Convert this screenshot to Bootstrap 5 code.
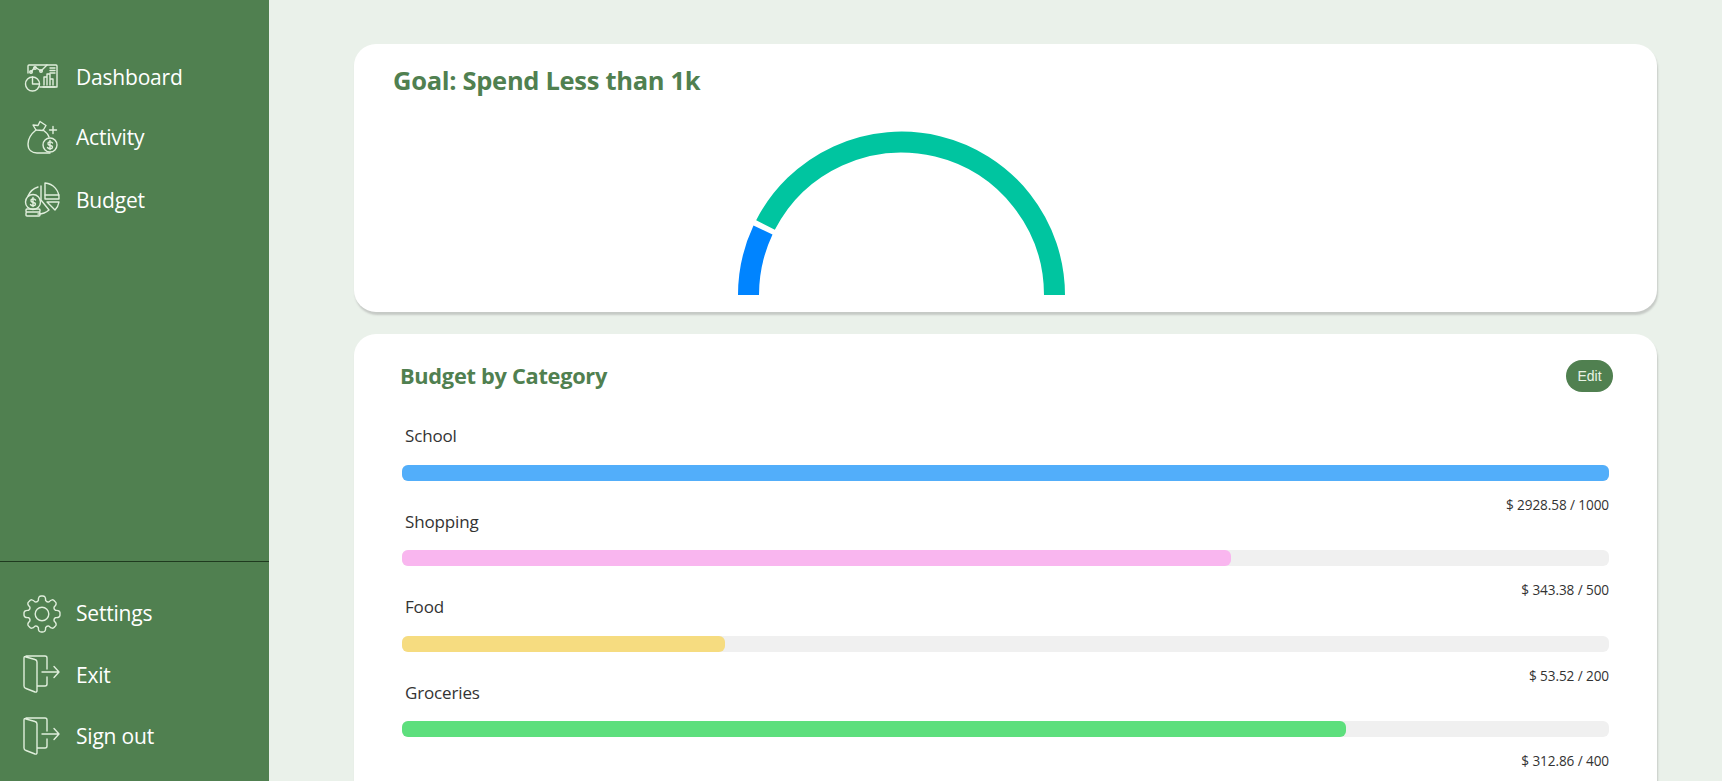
<!DOCTYPE html>
<html lang="en">
  <head>
    <meta charset="UTF-8" />
    <title>Budget</title>
    <link rel="stylesheet" href="https://cdn.jsdelivr.net/npm/bootstrap@5.3.3/dist/css/bootstrap.min.css" />
    <style>
      html, body { height: 100%; overflow: hidden; }
      body { background: #eaf1ea; font-family: "Open Sans", "Noto Sans", sans-serif; color: #333; }
      .side-bar { width: 269px; height: 781px; background: #508050; flex: none; padding-top: 48px; }
      .side-top { height: 513px; }
      .side-bottom { border-top: 1px solid #1f3a1f; padding-top: 21px; }
      .side-link { height: 60px; padding-left: 23px; color: #fff; font-size: 21px; letter-spacing: -0.2px; text-decoration: none; }
      .side-bottom .side-link { height: 61.5px; }
      .side-link svg { width: 38px; height: 38px; margin-right: 15px; flex: none; fill: none; stroke: #e0eedc; stroke-width: 1.4; stroke-linejoin: round; stroke-linecap: round; overflow: visible; }
      .side-top .side-link:nth-child(3) { margin-top: 3px; }
      .main-area { padding: 44px 65px 0 85px; }
      .white-box { background: #fff; border-radius: 22px; box-shadow: 1px 3px 2px #c6cac6; }
      .goal-box { height: 268px; padding: 19px 39px; }
      .goal-title { font-size: 25.5px; font-weight: 700; color: #508050; letter-spacing: -0.3px; margin: 0; line-height: 34px; }
      .gauge-wrap { margin: 33px 0 0 344px; }
      .gauge-wrap svg { display: block; }
      .budget-box { margin-top: 22px; height: 500px; padding: 26px 44px 0 46px; }
      .budget-title { font-size: 21.8px; font-weight: 700; color: #508050; letter-spacing: -0.3px; margin: 0; }
      .edit-btn { width: 47px; height: 32px; padding: 0; border: 0; border-radius: 16px; background: #508050; color: #e9f3e6; font: 14px "Liberation Sans", Arial, sans-serif; }
      .bars { margin: 32px 4px 0 2px; }
      .bar-row { height: 85.5px; }
      .bar-name { font-size: 17px; line-height: 24px; padding-left: 3px; letter-spacing: -0.15px; color: #333; }
      .bar-track { height: 16px; margin-top: 16.6px; background: #f0f0f0; border-radius: 6px; }
      .bar-fill { height: 100%; border-radius: 6px; }
      .bar-amount { font-size: 13.6px; line-height: 18px; margin-top: 15px; letter-spacing: -0.1px; color: #333; }
    </style>
  </head>
  <body class="d-flex">
    <div class="side-bar d-flex flex-column">
      <div class="side-top">
        <a class="side-link d-flex align-items-center" href="#">
          <svg viewBox="0 0 38 38"><path d="M5 14V7q0-1 1-1h27q1 0 1 1v21H17" /><path d="M8 13l4-5 6 4 6-6" /><circle cx="12" cy="9" r="1.300" /><circle cx="18" cy="12" r="1.300" /><circle cx="8" cy="13" r="1.300" /><circle cx="9.500" cy="25" r="7" /><path d="M9.500 18v7h7" /><path d="M21 26v-8h3v8M24 26V15h3v11M27 26v-6h3v6" /><path d="M20 28h12" /><path d="M27 9h5M27 11.500h5M27 14h5" /></svg>
          <span>Dashboard</span>
        </a>
        <a class="side-link d-flex align-items-center" href="#">
          <svg viewBox="0 0 38 38"><path d="M13 11l-3-5 5 .500 2-4 6 4-3 5z" /><path d="M13 11c-5 4-8 8-8 14 0 6 4 9 9 9h13" /><path d="M20 11c3 2 5 4 6 7" /><circle cx="27" cy="26" r="7" /><path d="M29.500 24c-2-2-5-1-4.500 1s4.500 1 4.500 3-3.500 2.500-5 .500M27 21.500v9" /><path d="M30 7.500v7M26.500 11h7" /></svg>
          <span>Activity</span>
        </a>
        <a class="side-link d-flex align-items-center" href="#">
          <svg viewBox="0 0 38 38"><path d="M18 4v14l8 10a16 16 0 0 1-11 4" /><path d="M15 5a16 16 0 0 0-10 9" /><path d="M22 1a15 15 0 0 1 14 16H22z" /><path d="M22 13h14" /><path d="M24 20h12a15 15 0 0 1-4 8z" /><circle cx="10" cy="20" r="7.500" /><path d="M12.500 18c-2-2-5-1-4.500 1s4.500 1 4.500 3-3.500 2.500-5 .500M10 15.500v9" /><path d="M3 28q0-1 1-1h12q1 0 1 1v1q0 1-1 1H4q-1 0-1-1zM3 31q0-1 1-1h12q1 0 1 1v2q0 1-1 1H4q-1 0-1-1z" /></svg>
          <span>Budget</span>
        </a>
      </div>
      <div class="side-bottom">
        <a class="side-link d-flex align-items-center" href="#">
          <svg viewBox="0 0 38 38"><path id="gear" /><circle cx="19" cy="19" r="6.800" /></svg>
          <span>Settings</span>
        </a>
        <a class="side-link d-flex align-items-center" href="#">
          <svg viewBox="0 0 38 38"><path d="M1 2v28q0 2 2 2.500l9 3.500q2 .500 2-1.500V6q0-2-2-2.500L3 1Q1 0 1 2zM3 0h19q2 0 2 2v11M24 21v7q0 2-2 2h-8" /><path d="M19 16h17M31 10.500l5 5.500-5 5.500" /></svg>
          <span>Exit</span>
        </a>
        <a class="side-link d-flex align-items-center" href="#">
          <svg viewBox="0 0 38 38"><path d="M1 2v28q0 2 2 2.500l9 3.500q2 .500 2-1.500V6q0-2-2-2.500L3 1Q1 0 1 2zM3 0h19q2 0 2 2v11M24 21v7q0 2-2 2h-8" /><path d="M19 16h17M31 10.500l5 5.500-5 5.500" /></svg>
          <span>Sign out</span>
        </a>
      </div>
    </div>
    <div class="main-area flex-grow-1">
      <div class="white-box goal-box">
        <h2 class="goal-title">Goal: Spend Less than 1k</h2>
        <div class="gauge-wrap">
          <svg width="330" height="165" viewBox="0 0 330 165" fill="none" stroke-width="21">
            <path d="M11.500 165A153 153 0 0 1 26 100" stroke="#0084ff" />
            <path d="M28.500 95A153 153 0 0 1 317.500 165" stroke="#00c5a0" />
          </svg>
        </div>
      </div>
      <div class="white-box budget-box">
        <div class="d-flex justify-content-between align-items-center">
          <h3 class="budget-title">Budget by Category</h3>
          <button class="edit-btn" type="button">Edit</button>
        </div>
        <div class="bars" id="bars"></div>
      </div>
    </div>
    <script>
      var rows = [
        { name: "School", pct: 100, color: "#52aefa", text: "$ 2928.58 / 1000" },
        { name: "Shopping", pct: 68.7, color: "#f9b6ef", text: "$ 343.38 / 500" },
        { name: "Food", pct: 26.8, color: "#f6dc80", text: "$ 53.52 / 200" },
        { name: "Groceries", pct: 78.2, color: "#5ddf7d", text: "$ 312.86 / 400" },
      ];
      document.getElementById("bars").innerHTML = rows
        .map(
          (r) =>
            `<div class="bar-row"><div class="bar-name">${r.name}</div><div class="bar-track"><div class="bar-fill" style="width:${r.pct}%;background:${r.color}"></div></div><div class="bar-amount text-end">${r.text}</div></div>`
        )
        .join("");

      // gear outline, eight rounded teeth
      function pt(r, deg) {
        var a = (deg * Math.PI) / 180;
        return (19 + r * Math.cos(a)).toFixed(2) + " " + (19 + r * Math.sin(a)).toFixed(2);
      }
      var d = "M" + pt(14, -15);
      for (var k = 0; k < 8; k++) {
        var t = k * 45;
        d += "Q" + pt(19, t - 12) + " " + pt(18, t);
        d += "Q" + pt(19, t + 12) + " " + pt(14, t + 15);
        d += "Q" + pt(12.5, t + 22.5) + " " + pt(14, t + 30);
      }
      document.getElementById("gear").setAttribute("d", d + "Z");
    </script>
    <script src="https://cdn.jsdelivr.net/npm/bootstrap@5.3.3/dist/js/bootstrap.bundle.min.js"></script>
  </body>
</html>
